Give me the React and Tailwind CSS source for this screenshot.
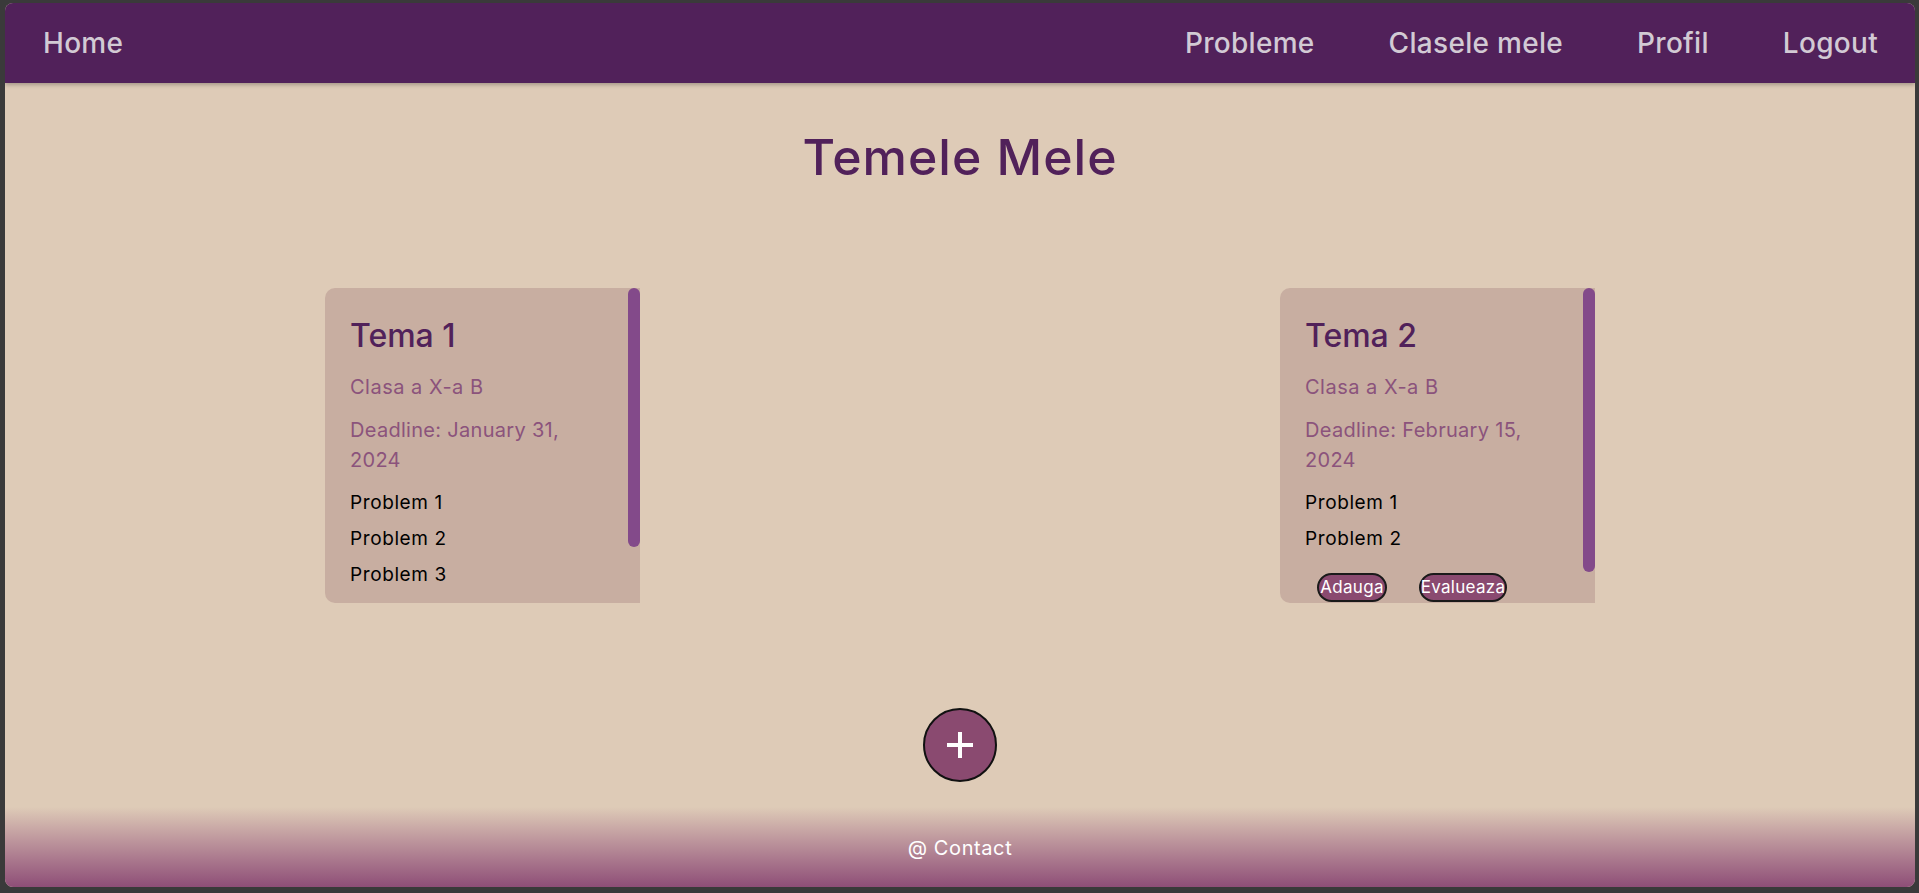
import React from "react";

function Card({ title, deadline, problems, thumb, buttons }) {
  return (
    <div className="flex w-[315px] h-[315px] rounded-l-[10px] bg-[#c8aea1] overflow-hidden">
      <div className="flex-1 overflow-hidden pl-[25px] pt-[33px]">
        <h2 className="text-[32px] leading-[30px] font-medium text-[#51215a]">{title}</h2>
        <p className="mt-[21px] text-[20px] leading-[30px] text-[#8b537c] tracking-[0.5px]">Clasa a X-a B</p>
        <p className="mt-[13px] text-[20px] leading-[30px] text-[#8b537c] tracking-[0.3px] w-[240px]">{deadline}</p>
        <ul className="mt-[10px]">
          {problems.map((p) => (
            <li key={p} className="text-[19px] leading-[36px] text-black tracking-[0.6px]">{p}</li>
          ))}
        </ul>
        {buttons && (
          <div className="mt-[16px] ml-[12px] flex gap-[32px]">
            <button className="w-[70px] h-[29px] rounded-full border-2 border-[#1a1a1a] bg-[#8a4a70] text-white text-[17px] leading-none tracking-[0.3px] flex items-center justify-center">Adauga</button>
            <button className="w-[88px] h-[29px] rounded-full border-2 border-[#1a1a1a] bg-[#8a4a70] text-white text-[17px] leading-none tracking-[0.3px] flex items-center justify-center">Evalueaza</button>
          </div>
        )}
      </div>
      <div className="w-[12px] shrink-0">
        <div className="w-[12px] rounded-full bg-[#834a8a]" style={{ height: thumb }} />
      </div>
    </div>
  );
}

export default function App() {
  return (
    <div className="min-h-screen bg-[#3a3a3a] pt-[3px] pl-[5px] pr-[4px] pb-[6px] font-[Inter,sans-serif]">
      <div className="flex flex-col h-[884px] rounded-lg overflow-hidden bg-[#decbb7]">
        <header className="h-[80px] shrink-0 bg-[#51215a] flex items-center justify-between pl-[38px] pr-[37px] shadow-[0_2px_4px_rgba(0,0,0,0.25)] relative z-10">
          <a className="text-[28px] font-medium text-[#d2cad4] tracking-[0.3px]">Home</a>
          <nav className="flex gap-[74px] text-[28px] font-medium text-[#d2cad4] tracking-[0.3px]">
            <a>Probleme</a>
            <a>Clasele mele</a>
            <a>Profil</a>
            <a>Logout</a>
          </nav>
        </header>
        <main className="flex-1 flex flex-col items-center">
          <h1 className="mt-[49px] text-[50px] leading-[50px] font-medium text-[#51215a] tracking-[1px]">Temele Mele</h1>
          <div className="mt-[106px] w-full flex justify-around">
            <Card
              title="Tema 1"
              deadline="Deadline: January 31, 2024"
              problems={["Problem 1", "Problem 2", "Problem 3"]}
              thumb={259}
            />
            <Card
              title="Tema 2"
              deadline="Deadline: February 15, 2024"
              problems={["Problem 1", "Problem 2"]}
              thumb={284}
              buttons
            />
          </div>
          <button className="mt-[105px] w-[74px] h-[74px] rounded-full border-2 border-[#111] bg-[#8a4a70] flex items-center justify-center">
            <svg width="28" height="28" viewBox="0 0 28 28">
              <path d="M14 1v26M1 14h26" stroke="white" strokeWidth="4" />
            </svg>
          </button>
        </main>
        <footer className="h-[80px] shrink-0 bg-linear-to-b from-[#decbb7] to-[#8e4e77] flex items-center justify-center pt-[2px]">
          <span className="text-[20px] text-white tracking-[0.6px]">@ Contact</span>
        </footer>
      </div>
    </div>
  );
}
